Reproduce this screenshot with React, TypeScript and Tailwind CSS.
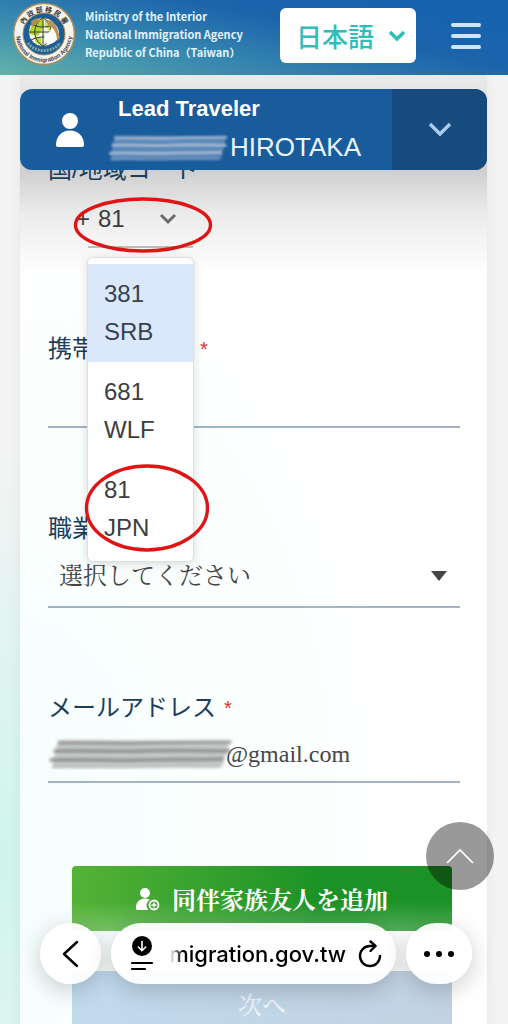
import type { ReactNode } from 'react';
import { cva } from 'class-variance-authority';
import clsx from 'clsx';

interface DialCode {
  code: string;
  country: string;
}

const DIAL_CODES: DialCode[] = [
  { code: '381', country: 'SRB' },
  { code: '681', country: 'WLF' },
  { code: '81', country: 'JPN' },
];

const HIGHLIGHTED = '381';

const control = cva(
  "w-full border-b-2 border-[#a3b3c6] bg-transparent text-2xl text-[#454545] outline-none font-['Liberation_Serif','Noto_Serif_CJK_JP','Noto_Sans_CJK_JP',serif]",
);

const roundButton = cva(
  'flex items-center justify-center rounded-full bg-white/95 shadow-[0_6px_24px_rgba(0,0,0,0.2)]',
);

function Emblem() {
  return (
    <svg viewBox="0 0 64 64" className="mb-2 h-16 w-16 shrink-0" role="img" aria-label="National Immigration Agency">
      <defs>
        <path id="arc-top" d="M10 32a22 22 0 0 1 44 0" />
        <path id="arc-bottom" d="M4 32a28 28 0 0 0 56 0" />
      </defs>
      <circle cx="32" cy="32" r="30.5" fill="#f6f4ee" stroke="#a98d5c" strokeWidth="1.6" />
      <circle cx="32" cy="32" r="21" fill="#1b5d98" stroke="#a98d5c" strokeWidth="1" />
      <path d="M16 41c7 10 25 10 32 0" fill="none" stroke="#7fa7a0" strokeWidth="3" strokeDasharray="2 1" />
      <circle cx="31" cy="30" r="14.5" fill="#f4f6e8" stroke="#29435c" strokeWidth="0.8" />
      <path d="M20 21l10-5 2 8-6 10-9-2z" fill="#b6d230" />
      <path d="M33 17l8 3 3 8-7 1-4-5z" fill="#d5d44a" />
      <path d="M22 35l7 1 1 7-6-2z" fill="#c3d636" />
      <path
        d="M31 15.5v29M16.5 30h29M31 15.5c-11 8-11 21 0 29M31 15.5c11 8 11 21 0 29M19 22c8 4 16 4 24 0M19 38c8-4 16-4 24 0"
        fill="none"
        stroke="#2c4432"
        strokeWidth="1"
      />
      <path d="M36 22c6-3 11 3 11 9s-4 10-9 11c-5 0-8-4-5-8s7-4 6-9z" fill="#fdfdfb" />
      <path d="M35 18c6 1 10 5 11 11l2 7-3 3c0-8-3-13-9-16z" fill="#b4935b" />
      <path d="M19 19l6-3 3 3-8 6z" fill="#ad8f4f" />
      <text fontSize="7" fontWeight="700" fill="#3f3833" textAnchor="middle" className="font-['Noto_Sans_CJK_TC',sans-serif]">
        <textPath href="#arc-top" startOffset="50%">內 政 部 移 民 署</textPath>
      </text>
      <text fontSize="6" fontWeight="700" fill="#3d3a48" textAnchor="middle" className="font-['Liberation_Sans',sans-serif]">
        <textPath href="#arc-bottom" startOffset="50%">National Immigration Agency</textPath>
      </text>
    </svg>
  );
}

// hand-rubbed strokes that cover private text
function Smudge({ color, id, className }: { color: string; id: string; className?: string }) {
  return (
    <svg viewBox="0 0 190 34" preserveAspectRatio="none" className={className} aria-hidden="true">
      <filter id={id} x="-5%" y="-20%" width="110%" height="140%">
        <feGaussianBlur stdDeviation="1.5" />
      </filter>
      <g filter={`url(#${id})`} fill="none" stroke={color} strokeLinecap="round">
        <path d="M10 4l174 1-8 26-172 1z" fill={color} stroke="none" opacity="0.45" />
        <path d="M12 7c30-1 50 1 85 0s60-1 87-1" strokeWidth="3.5" opacity="0.75" />
        <path d="M7 15c30-1 60 1 90 0s55 0 86 0" strokeWidth="3.5" opacity="0.9" />
        <path d="M3 24c40-1 60 1 90 0s50 0 83-1" strokeWidth="3.5" opacity="0.9" />
        <path d="M5 31c30-1 60 1 90 0s50 0 78 0" strokeWidth="2" opacity="0.4" />
      </g>
    </svg>
  );
}

function Header() {
  return (
    <header className="flex h-[75px] shrink-0 items-center bg-[linear-gradient(12deg,#62b3a8_0%,#3b8bb0_30%,#1c65ac_62%,#1660ae_100%)] pr-[27px] pl-3">
      <Emblem />
      <p className="mb-2 ml-[9px] flex-1 text-[11px] leading-[18px] font-bold whitespace-nowrap text-[#e2f3ff] font-['Noto_Sans_CJK_TC',sans-serif]">
        Ministry of the Interior
        <br />
        National Immigration Agency
        <br />
        Republic of China（Taiwan）
      </p>
      <button
        type="button"
        className="mb-1 flex h-[55px] w-[136px] items-center justify-between rounded-md bg-white pr-[10px] pl-4 text-[26px] font-medium text-[#2fbdb9] font-['Noto_Sans_CJK_JP',sans-serif]"
      >
        日本語
        <svg viewBox="0 0 18 12" className="h-3 w-[18px]" fill="none" stroke="currentColor" strokeWidth="3.6">
          <path d="M2 2l7 7 7-7" />
        </svg>
      </button>
      <button type="button" aria-label="メニュー" className="mb-1 ml-[35px] flex w-[30px] flex-col gap-[7px]">
        <span className="h-1 rounded-xs bg-[#cfe6ff]" />
        <span className="h-1 rounded-xs bg-[#cfe6ff]" />
        <span className="h-1 rounded-xs bg-[#cfe6ff]" />
      </button>
    </header>
  );
}

function TravelerBar() {
  return (
    <section className="absolute inset-x-0 top-[14px] z-20 flex h-[81px] overflow-hidden rounded-xl bg-[#195c9c] font-['Liberation_Sans',sans-serif] text-white">
      <div className="flex w-[88px] items-center pl-[35px]">
        <svg viewBox="0 0 30 34" className="h-[34px] w-[30px]" fill="#fff">
          <circle cx="15" cy="8" r="8" />
          <path d="M1 32c0-9 6-14.500 14-14.500S29 23 29 32c0 1.300-.7 2-2 2H3c-1.300 0-2-.7-2-2z" />
        </svg>
      </div>
      <div className="flex flex-1 flex-col">
        <h2 className="ml-[10px] pt-1 text-[22px] leading-8 font-bold">Lead Traveler</h2>
        <p className="flex items-center text-[26px] leading-[44px] text-[#eaf4ff]">
          <Smudge color="#a9bbd6" id="smudge-name" className="h-[30px] w-[122px]" />
          HIROTAKA
        </p>
      </div>
      <button type="button" aria-label="開く" className="flex w-[95px] items-center justify-center bg-[#174b80]">
        <svg viewBox="0 0 24 16" className="h-4 w-6" fill="none" stroke="#a9cdf2" strokeWidth="3.4">
          <path d="M2 2l10 10L22 2" />
        </svg>
      </button>
    </section>
  );
}

function Label({ htmlFor, required, children }: { htmlFor: string; required?: boolean; children: ReactNode }) {
  return (
    <label
      htmlFor={htmlFor}
      className="flex h-8 items-center text-2xl leading-8 text-[#1d3d5c] font-['Liberation_Sans','Noto_Sans_CJK_JP',sans-serif]"
    >
      {children}
      {required && <span className="ml-2 text-xl leading-8 text-[#dc3030]">*</span>}
    </label>
  );
}

function DialCodeField() {
  return (
    <div className="relative z-10 font-['Liberation_Sans','Noto_Sans_CJK_JP',sans-serif]">
      <Label htmlFor="dial-code">国/地域コード</Label>
      <div className="mt-2 ml-7 flex h-[54px] text-2xl text-[#3c3c3c]">
        <span className="w-3 leading-[50px]">+</span>
        <button
          id="dial-code"
          type="button"
          role="combobox"
          aria-expanded="true"
          aria-controls="dial-code-list"
          className="flex w-[105px] items-center justify-between border-b-2 border-[#bdbdbd] pr-4 pb-[2px] pl-[10px]"
        >
          81
          <svg viewBox="0 0 18 12" className="h-3 w-[18px]" fill="none" stroke="#6b6b6b" strokeWidth="3">
            <path d="M2 2l7 7 7-7" />
          </svg>
        </button>
      </div>
      <ul
        id="dial-code-list"
        role="listbox"
        className="absolute top-[103px] left-[39px] w-[107px] rounded-md border border-[#dcdfe3] bg-white pt-[6px] pb-[3px] text-2xl leading-[38px] text-[#3d3d3d] shadow-[0_2px_10px_rgba(0,0,0,0.14)]"
      >
        {DIAL_CODES.map(({ code, country }) => (
          <li
            key={code}
            role="option"
            aria-selected={code === HIGHLIGHTED}
            className={clsx('py-[11px] pl-4', code === HIGHLIGHTED && 'bg-[#dbe8fc] text-[#37424f]')}
          >
            {code}
            <br />
            {country}
          </li>
        ))}
      </ul>
      <svg viewBox="0 0 140 56" className="absolute top-[43px] left-[25px] h-14 w-[140px]" fill="none" stroke="#df1414" strokeWidth="3.4">
        <ellipse cx="70" cy="28" rx="67.500" ry="26" />
      </svg>
      <svg viewBox="0 0 126 90" className="absolute top-[309px] left-[36px] h-[90px] w-[126px]" fill="none" stroke="#df1414" strokeWidth="3.4">
        <ellipse cx="63" cy="45" rx="60.500" ry="42" />
      </svg>
    </div>
  );
}

function BrowserBar() {
  return (
    <nav className="fixed inset-x-0 bottom-10 z-30 flex h-[61px] gap-[10px] pr-9 pl-10 text-black">
      <button type="button" aria-label="戻る" className={clsx(roundButton(), 'w-[61px]')}>
        <svg viewBox="0 0 18 28" className="h-7 w-[18px]" fill="none" stroke="currentColor" strokeWidth="2.4" strokeLinecap="round" strokeLinejoin="round">
          <path d="M15 2L2 14l13 12" />
        </svg>
      </button>
      <div className={clsx(roundButton(), 'min-w-0 flex-1 pr-[14px] pl-[19px]')}>
        <button type="button" aria-label="ダウンロード" className="shrink-0">
          <svg viewBox="0 0 24 36" className="h-9 w-6" fill="none" stroke="currentColor" strokeWidth="2.2" strokeLinecap="round">
            <circle cx="12" cy="10" r="10" fill="currentColor" stroke="none" />
            <path d="M12 5.500v9M8.300 11l3.700 3.700 3.700-3.700" stroke="#fff" strokeWidth="1.6" />
            <path d="M2 27h20M2 33h13" />
          </svg>
        </button>
        <span className="ml-4 flex min-w-0 flex-1 justify-end overflow-hidden mask-[linear-gradient(to_right,transparent,black_12px)] text-[22px] leading-8 font-medium whitespace-nowrap font-['Inter',sans-serif]">
          immigration.gov.tw
        </span>
        <button type="button" aria-label="再読み込み" className="ml-3 shrink-0">
          <svg viewBox="0 0 24 28" className="h-7 w-6" fill="none" stroke="currentColor" strokeWidth="2.4" strokeLinecap="round" strokeLinejoin="round">
            <path d="M22 16a10 10 0 1 1-10-10h5" />
            <path d="M12.500 1.500L17.500 6l-5 5" />
          </svg>
        </button>
      </div>
      <button type="button" aria-label="その他" className={clsx(roundButton(), 'w-[66px]')}>
        <svg viewBox="0 0 30 6" className="h-[6px] w-[30px]" fill="currentColor">
          <circle cx="3" cy="3" r="3" />
          <circle cx="15" cy="3" r="3" />
          <circle cx="27" cy="3" r="3" />
        </svg>
      </button>
    </nav>
  );
}

export default function App() {
  return (
    <div className="h-screen overflow-hidden bg-[#f4f4f4]">
      <div className="flex h-full flex-col bg-[radial-gradient(ellipse_120px_420px_at_0%_84%,#cdf5ec_0%,transparent_100%)]">
        <Header />
        <main className="relative mr-[21px] ml-5 flex-1 bg-white bg-[radial-gradient(ellipse_at_0%_78%,#f5fefd_0%,transparent_60%)] shadow-[0_0_14px_rgba(0,0,0,0.06)]">
          <div className="absolute inset-x-0 top-0 h-[200px] bg-[linear-gradient(#eaeaea_0%,#cfcfcf_48%,#ececec_70%,transparent_100%)]" />
          <TravelerBar />
          <form className="relative pt-[79px] pr-[27px] pl-7">
            <DialCodeField />

            <div className="mt-[85px]">
              <Label htmlFor="phone" required>携帯電話番号</Label>
              <input id="phone" type="tel" className={clsx(control(), 'mt-1 block h-[59px]')} />
            </div>

            <div className="mt-[85px]">
              <Label htmlFor="job">職業</Label>
              <div className="relative mt-1">
                <select id="job" className={clsx(control(), 'block h-[59px] appearance-none pb-1 pl-[11px]')}>
                  <option>選択してください</option>
                </select>
                <svg viewBox="0 0 16 10" className="pointer-events-none absolute top-[22px] right-[13px] h-[10px] w-4" fill="#454545">
                  <path d="M0 0h16L8 10z" />
                </svg>
              </div>
            </div>

            <div className="mt-[84px]">
              <Label htmlFor="email" required>メールアドレス</Label>
              <div className="relative mt-1">
                <input id="email" type="text" defaultValue="@gmail.com" className={clsx(control(), 'block h-[55px] pl-[178px]')} />
                <Smudge color="#8a8a8a" id="smudge-mail" className="absolute top-2 left-0 h-[34px] w-[188px]" />
              </div>
            </div>

            <div className="mt-[83px] mr-2 ml-6 flex flex-col gap-10 text-2xl text-white font-['Noto_Serif_CJK_JP','Noto_Sans_CJK_JP',serif]">
              <button
                type="button"
                className="flex h-[65px] items-center justify-center gap-3 rounded-sm bg-[linear-gradient(to_bottom,transparent_55%,rgba(255,255,255,0.25)),linear-gradient(100deg,#55b336,#1b9226_65%)] font-bold"
              >
                <svg viewBox="0 0 24 24" className="h-6 w-6" fill="#fff">
                  <circle cx="9" cy="6" r="5" />
                  <path d="M0 21c0-6 3.500-9.500 9-9.500 2 0 3.500.4 4.800 1.300A6.300 6.300 0 0 0 12.300 23H1.500C.5 23 0 22.300 0 21z" />
                  <circle cx="18" cy="18" r="4.500" fill="none" stroke="#fff" strokeWidth="1.8" />
                  <path d="M17.300 15.500h1.400v1.800h1.800v1.400h-1.800v1.800h-1.400v-1.800h-1.800v-1.400h1.800z" />
                </svg>
                同伴家族友人を追加
              </button>
              <button type="button" className="h-[65px] rounded-sm bg-[linear-gradient(100deg,#c0daee,#c2d2e2)] font-medium text-[#edf3f9]">
                次へ
              </button>
            </div>
          </form>
        </main>
      </div>

      <button
        type="button"
        aria-label="トップへ"
        className="fixed right-[14px] bottom-[134px] z-20 flex h-[68px] w-[68px] items-center justify-center rounded-full bg-black/40"
      >
        <svg viewBox="0 0 28 16" className="h-4 w-7" fill="none" stroke="#fff" strokeWidth="1.6">
          <path d="M1 15L14 2l13 13" />
        </svg>
      </button>
      <BrowserBar />
    </div>
  );
}
